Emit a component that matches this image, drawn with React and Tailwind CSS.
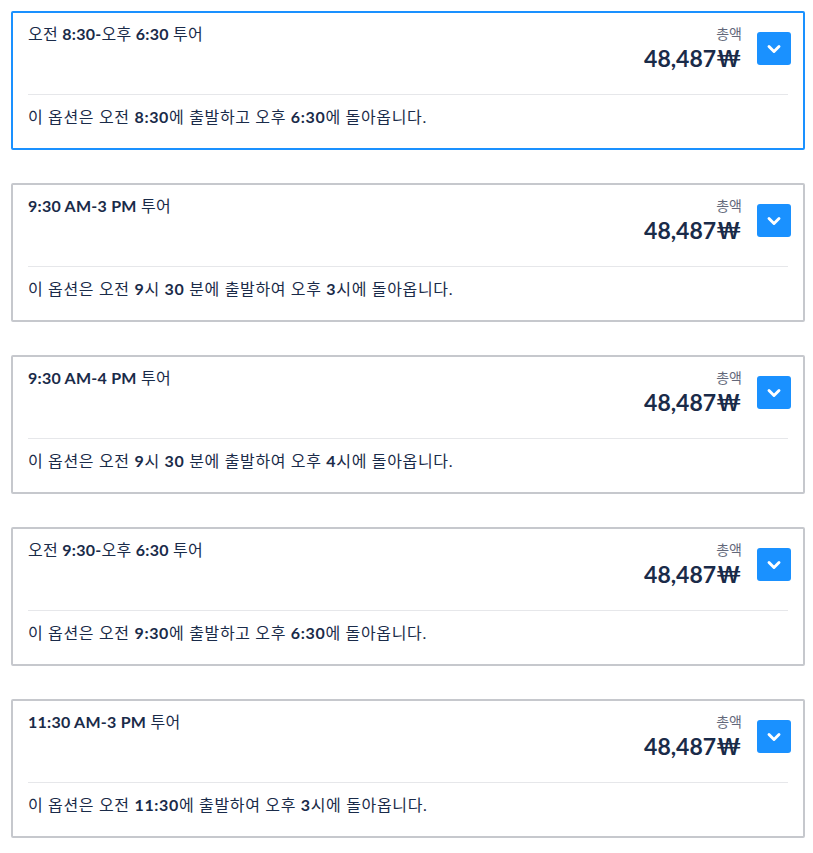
import { ChevronDown } from "lucide-react";

const options = [
  {
    title: [["오전 ", false], ["8:30-", true], ["오후 ", false], ["6:30", true], [" 투어", false]],
    desc: [["이 옵션은 오전 ", false], ["8:30", true], ["에 출발하고 오후 ", false], ["6:30", true], ["에 돌아옵니다.", false]],
    active: true,
  },
  {
    title: [["9:30 AM-3 PM", true], [" 투어", false]],
    desc: [["이 옵션은 오전 ", false], ["9", true], ["시 ", false], ["30", true], [" 분에 출발하여 오후 ", false], ["3", true], ["시에 돌아옵니다.", false]],
  },
  {
    title: [["9:30 AM-4 PM", true], [" 투어", false]],
    desc: [["이 옵션은 오전 ", false], ["9", true], ["시 ", false], ["30", true], [" 분에 출발하여 오후 ", false], ["4", true], ["시에 돌아옵니다.", false]],
  },
  {
    title: [["오전 ", false], ["9:30-", true], ["오후 ", false], ["6:30", true], [" 투어", false]],
    desc: [["이 옵션은 오전 ", false], ["9:30", true], ["에 출발하고 오후 ", false], ["6:30", true], ["에 돌아옵니다.", false]],
  },
  {
    title: [["11:30 AM-3 PM", true], [" 투어", false]],
    desc: [["이 옵션은 오전 ", false], ["11:30", true], ["에 출발하여 오후 ", false], ["3", true], ["시에 돌아옵니다.", false]],
  },
];

function Rich({ parts }) {
  return parts.map(([text, bold], i) => (
    <span key={i} className={bold ? "font-bold" : ""}>
      {text}
    </span>
  ));
}

function OptionCard({ option }) {
  return (
    <div
      className={`border-2 rounded-[2px] bg-white ${
        option.active ? "border-[#1a91ff]" : "border-[#c6c8cd]"
      }`}
    >
      <div className="flex justify-between h-[81px] pl-[15px] pr-[12px] pt-[10px]">
        <div className="text-[16px] leading-[22px] tracking-[0.25px] text-[#1a2b49]">
          <Rich parts={option.title} />
        </div>
        <div className="flex items-start gap-[15px]">
          <div className="text-right pt-[2px]">
            <div className="text-[14px] leading-[18px] text-[#63687a]">총액</div>
            <div className="text-[23px] leading-[30px] font-bold text-[#1a2b49] mr-[1px]">
              48,487₩
            </div>
          </div>
          <button className="mt-[9px] w-[34px] h-[33px] rounded-[3px] bg-[#1a91ff] flex items-center justify-center">
            <ChevronDown size={20} strokeWidth={3.5} className="text-white" />
          </button>
        </div>
      </div>
      <div className="mx-[15px] border-t border-[#e6e7ea]" />
      <div className="h-[53px] px-[15px] pt-[10px] text-[16px] leading-[24px] tracking-[0.65px] text-[#1a2b49]">
        <Rich parts={option.desc} />
      </div>
    </div>
  );
}

export default function App() {
  return (
    <div
      className="min-h-screen bg-white pt-[11px] pl-[11px] pr-[8px] flex flex-col gap-[33px]"
      style={{ fontFamily: 'Lato, "Noto Sans CJK KR", sans-serif' }}
    >
      {options.map((o, i) => (
        <OptionCard key={i} option={o} />
      ))}
    </div>
  );
}
